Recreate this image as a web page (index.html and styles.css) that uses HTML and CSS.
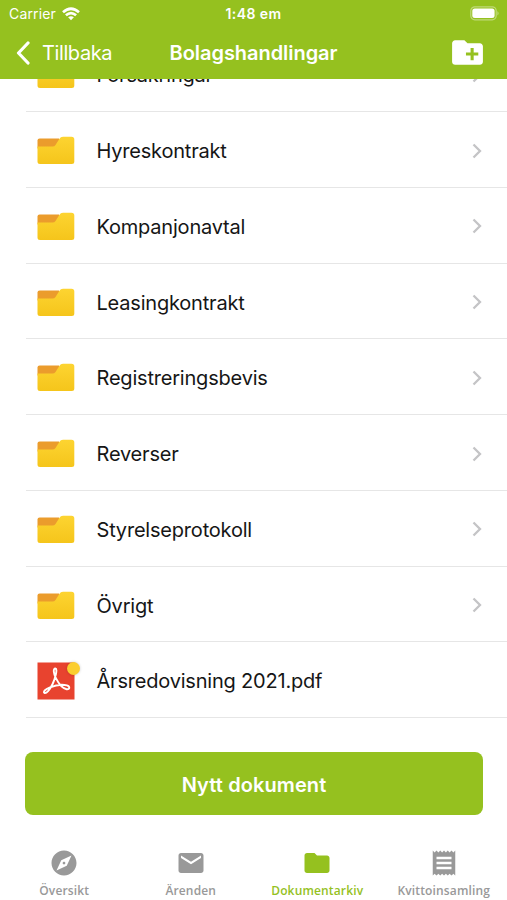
FILE: index.html
```html
<!DOCTYPE html>
<html lang="sv">
<head>
<meta charset="utf-8">
<title>Bolagshandlingar</title>
<link rel="stylesheet" href="styles.css">
</head>
<body>
<svg width="0" height="0" class="defs" aria-hidden="true">
  <defs>
    <linearGradient id="front" x1="0" y1="0" x2="0" y2="1"><stop offset="0" stop-color="#fdd431"/><stop offset="1" stop-color="#f5c51b"/></linearGradient>
    <symbol id="folder" viewBox="0 0 38 29">
      <path d="M2.6 2.5H22v10H.5V4.6q0-2.1 2.1-2.1z" fill="#eb9c2c"/>
      <path d="M.5 10.500H15.500Q17.500 10.500 18.500 9L22.300 3Q23.600.8 26 .8H34.500Q37.300.8 37.300 3.500V25.500Q37.300 28 34.800 28H3Q.5 28 .5 25.500z" fill="url(#front)"/>
    </symbol>
    <symbol id="chevron" viewBox="0 0 10 16"><path d="M1.500 1.500 8 8l-6.500 6.500" fill="none" stroke="#c4c4c6" stroke-width="2.300"/></symbol>
  </defs>
</svg>
<div class="screen">
  <header class="header">
    <div class="status">
      <div class="carrier"><span>Carrier</span>
        <svg width="18" height="14" viewBox="0 0 18 14" fill="none" stroke="#fff" stroke-width="2.700"><path d="M1 5.200Q9-1.700 17 5.200M3.900 8.300Q9 3.900 14.100 8.300"/><path d="M9 13.300 6.100 10.300Q9 8 11.900 10.300z" fill="#fff" stroke="none"/></svg>
      </div>
      <div class="clock">1:48 em</div>
      <svg class="battery" width="30" height="15" viewBox="0 0 30 15"><rect x=".8" y=".8" width="25.400" height="13" rx="4" fill="none" stroke="#fff" stroke-opacity=".4" stroke-width="1.200"/><rect x="2.300" y="2.500" width="22.300" height="9.600" rx="2.500" fill="#fff"/><path d="M27.500 5q2 2.300 0 4.600z" fill="#fff" fill-opacity=".5"/></svg>
    </div>
    <nav class="nav">
      <div class="back"><svg width="14" height="24" viewBox="0 0 14 24"><path d="M12 2 2.500 12l9.500 10" fill="none" stroke="#fff" stroke-width="3.200" stroke-linecap="round" stroke-linejoin="round"/></svg><span>Tillbaka</span></div>
      <h1 class="title">Bolagshandlingar</h1>
      <svg class="add" width="37" height="37" viewBox="0 0 24 24" fill="#fff"><path d="M20 6h-8l-2-2H4c-1.110 0-1.990.890-1.990 2L2 18c0 1.110.890 2 2 2h16c1.110 0 2-.890 2-2V8c0-1.110-.890-2-2-2zm-1 8h-3v3h-2v-3h-3v-2h3V9h2v3h3v2z"/></svg>
    </nav>
  </header>
  <main class="content">
    <ul class="list">
      <li class="row"><svg class="folder"><use href="#folder"/></svg><span class="name">Försäkringar</span><svg class="chev"><use href="#chevron"/></svg></li>
      <li class="row"><svg class="folder"><use href="#folder"/></svg><span class="name">Hyreskontrakt</span><svg class="chev"><use href="#chevron"/></svg></li>
      <li class="row"><svg class="folder"><use href="#folder"/></svg><span class="name">Kompanjonavtal</span><svg class="chev"><use href="#chevron"/></svg></li>
      <li class="row"><svg class="folder"><use href="#folder"/></svg><span class="name">Leasingkontrakt</span><svg class="chev"><use href="#chevron"/></svg></li>
      <li class="row"><svg class="folder"><use href="#folder"/></svg><span class="name">Registreringsbevis</span><svg class="chev"><use href="#chevron"/></svg></li>
      <li class="row"><svg class="folder"><use href="#folder"/></svg><span class="name">Reverser</span><svg class="chev"><use href="#chevron"/></svg></li>
      <li class="row"><svg class="folder"><use href="#folder"/></svg><span class="name">Styrelseprotokoll</span><svg class="chev"><use href="#chevron"/></svg></li>
      <li class="row"><svg class="folder"><use href="#folder"/></svg><span class="name">Övrigt</span><svg class="chev"><use href="#chevron"/></svg></li>
      <li class="row">
        <span class="pdf">
          <svg width="38" height="38" viewBox="0 0 38 38"><path d="M.5.500h37v37H.5z" fill="#e8432f"/><path d="M18.500 6.500c-2.800 0-1.800 5.300.4 9.700 2.300 4.600 6.700 10.400 10.700 11 3.400.5 3.600-2.800.3-3.800-4.200-1.200-11.700-.2-16.900 1.900-4.500 1.800-7 4.300-5.700 5.400 1.800 1.500 5.500-3 8.300-8.700 2.600-5.400 5.200-15.500 2.900-15.500z" fill="none" stroke="#fff" stroke-width="1.900" stroke-linejoin="round"/></svg>
          <span class="dot"></span>
        </span>
        <span class="name">Årsredovisning 2021.pdf</span>
      </li>
    </ul>
    <button class="primary">Nytt dokument</button>
  </main>
  <footer class="tabs">
    <div class="tab"><svg viewBox="0 0 24 24"><path d="M12 10.900c-.610 0-1.100.490-1.100 1.100s.490 1.100 1.100 1.100c.610 0 1.100-.490 1.100-1.100s-.490-1.100-1.100-1.100zM12 2C6.480 2 2 6.480 2 12s4.480 10 10 10 10-4.480 10-10S17.520 2 12 2zm2.190 12.190L6 18l3.810-8.190L18 6l-3.810 8.190z"/></svg><span>Översikt</span></div>
    <div class="tab"><svg viewBox="0 0 24 24"><path d="M20 4H4c-1.100 0-1.990.900-1.990 2L2 18c0 1.100.900 2 2 2h16c1.100 0 2-.900 2-2V6c0-1.100-.900-2-2-2zm0 4l-8 5-8-5V6l8 5 8-5v2z"/></svg><span>Ärenden</span></div>
    <div class="tab active"><svg viewBox="0 0 24 24"><path d="M10 4H4c-1.100 0-1.990.900-1.990 2L2 18c0 1.100.900 2 2 2h16c1.100 0 2-.900 2-2V8c0-1.100-.900-2-2-2h-8l-2-2z"/></svg><span>Dokumentarkiv</span></div>
    <div class="tab"><svg viewBox="0 0 24 24"><path d="M18 17H6v-2h12v2zm0-4H6v-2h12v2zm0-4H6V7h12v2zM3 22l1.500-1.500L6 22l1.500-1.500L9 22l1.500-1.500L12 22l1.500-1.500L15 22l1.500-1.500L18 22l1.500-1.500L21 22V2l-1.500 1.500L18 2l-1.500 1.500L15 2l-1.500 1.500L12 2l-1.500 1.500L9 2 7.500 3.500 6 2 4.500 3.500 3 2v20z"/></svg><span>Kvittoinsamling</span></div>
  </footer>
</div>
</body>
</html>
```
FILE: styles.css
```css
* { box-sizing: border-box; }
body { margin: 0; background: #fff; font-family: Inter, "Liberation Sans", sans-serif; color: #161616; }
.defs { display: block; }
.screen { width: 507px; height: 900px; display: flex; flex-direction: column; overflow: hidden; }
.header { height: 79px; flex: none; background: #95c11f; color: #fff; }
.status { height: 27px; display: grid; grid-template-columns: 1fr auto 1fr; align-items: center; padding: 0 7px; font-size: 14px; line-height: 27px; }
.carrier { display: flex; align-items: center; gap: 6px; padding-left: 2px; letter-spacing: .15px; }
.clock { font-weight: 600; letter-spacing: .45px; }
.battery { justify-self: end; }
.nav { height: 50px; display: grid; grid-template-columns: 1fr auto 1fr; align-items: center; padding: 1px 21px 0; }
.back { display: flex; align-items: center; gap: 12px; margin-left: -5px; font-size: 20px; letter-spacing: -.4px; }
.title { margin: 0; font-size: 20px; font-weight: 600; letter-spacing: -.05px; }
.add { justify-self: end; }
.content { height: 736px; flex: none; overflow: hidden; display: flex; flex-direction: column; }
.list { list-style: none; margin: -42.600px 0 0; padding: 0 0 0 26px; flex: none; }
.row { height: 75.750px; border-bottom: 1px solid #e6e6e6; display: flex; align-items: center; padding: 2px 25px 0 11px; }
.folder { width: 38px; height: 29px; flex: none; }
.name { margin-left: 21.500px; padding-top: 1px; flex: 1; font-size: 20px; letter-spacing: -.2px; white-space: nowrap; }
.chev { width: 10px; height: 16px; flex: none; }
.pdf { position: relative; width: 38px; height: 38px; }
.pdf svg { display: block; }
.dot { position: absolute; top: 0; right: -5px; width: 13px; height: 13px; border-radius: 50%; background: #fbce2f; box-shadow: 0 0 3px rgba(0,0,0,.2); }
.primary { margin: 34px 24px 0 25px; padding: 3px 0 0; height: 63px; flex: none; border: 0; border-radius: 8px; background: #95c11f; color: #fff; font: 600 20px Inter, sans-serif; letter-spacing: .1px; }
.tabs { flex: 1; display: grid; grid-template-columns: repeat(4, 1fr); padding: 33px 0 0 1px; }
.tab { display: flex; flex-direction: column; align-items: center; color: #999; font: 600 12px/16px "Open Sans", sans-serif; letter-spacing: .15px; white-space: nowrap; }
.tab svg { width: 30px; height: 30px; fill: currentColor; flex: none; margin-bottom: 5px; }
.active { color: #95c11f; }
```
